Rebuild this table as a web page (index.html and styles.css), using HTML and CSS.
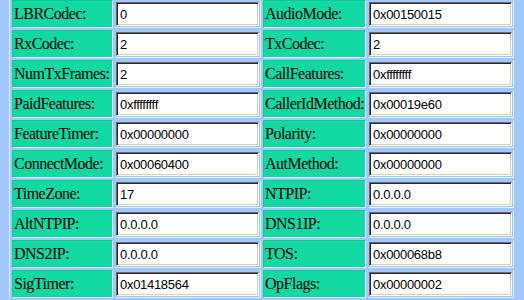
FILE: index.html
```html
<!DOCTYPE html>
<html>
<head>
<meta charset="utf-8">
<link rel="stylesheet" href="styles.css">
</head>
<body>
<div class="frame">
  <div class="grid">
    <div class="lbl">LBRCodec:</div><div class="val"><input class="fld" type="text" value="0"></div>
    <div class="lbl">AudioMode:</div><div class="val"><input class="fld" type="text" value="0x00150015"></div>

    <div class="lbl">RxCodec:</div><div class="val"><input class="fld" type="text" value="2"></div>
    <div class="lbl">TxCodec:</div><div class="val"><input class="fld" type="text" value="2"></div>

    <div class="lbl">NumTxFrames:</div><div class="val"><input class="fld" type="text" value="2"></div>
    <div class="lbl">CallFeatures:</div><div class="val"><input class="fld" type="text" value="0xffffffff"></div>

    <div class="lbl">PaidFeatures:</div><div class="val"><input class="fld" type="text" value="0xffffffff"></div>
    <div class="lbl">CallerIdMethod:</div><div class="val"><input class="fld" type="text" value="0x00019e60"></div>

    <div class="lbl">FeatureTimer:</div><div class="val"><input class="fld" type="text" value="0x00000000"></div>
    <div class="lbl">Polarity:</div><div class="val"><input class="fld" type="text" value="0x00000000"></div>

    <div class="lbl">ConnectMode:</div><div class="val"><input class="fld" type="text" value="0x00060400"></div>
    <div class="lbl">AutMethod:</div><div class="val"><input class="fld" type="text" value="0x00000000"></div>

    <div class="lbl">TimeZone:</div><div class="val"><input class="fld" type="text" value="17"></div>
    <div class="lbl">NTPIP:</div><div class="val"><input class="fld" type="text" value="0.0.0.0"></div>

    <div class="lbl">AltNTPIP:</div><div class="val"><input class="fld" type="text" value="0.0.0.0"></div>
    <div class="lbl">DNS1IP:</div><div class="val"><input class="fld" type="text" value="0.0.0.0"></div>

    <div class="lbl">DNS2IP:</div><div class="val"><input class="fld" type="text" value="0.0.0.0"></div>
    <div class="lbl">TOS:</div><div class="val"><input class="fld" type="text" value="0x000068b8"></div>

    <div class="lbl">SigTimer:</div><div class="val"><input class="fld" type="text" value="0x01418564"></div>
    <div class="lbl">OpFlags:</div><div class="val"><input class="fld" type="text" value="0x00000002"></div>
  </div>
</div>
</body>
</html>
```
FILE: styles.css
```css
html, body {
  margin: 0;
  padding: 0;
  background: #a0c8fa;
  overflow: hidden;
}

.frame {
  margin-left: 9px;
  width: 505px;
  border-left: 1px solid #e4f0ff;
  padding-left: 2px;
}

.grid {
  display: grid;
  grid-template-columns: 101px 146px 103px 146px;
  grid-auto-rows: 28px;
  column-gap: 2px;
  row-gap: 2px;
}

.lbl {
  box-sizing: border-box;
  background: #12d8a2;
  border-top: 1px solid #10c896;
  border-left: 1px solid #10c896;
  border-right: 1px solid #e4f0ff;
  border-bottom: 1px solid #e4f0ff;
  padding-left: 1px;
  display: flex;
  align-items: center;
  font-family: "Liberation Serif", "Times New Roman", serif;
  font-size: 16px;
  letter-spacing: -0.5px;
  color: #000;
  white-space: nowrap;
  overflow: hidden;
}

.val {
  box-sizing: border-box;
  border-top: 1px solid #a0c8fa;
  border-left: 1px solid #a0c8fa;
  border-right: 1px solid #e4f0ff;
  border-bottom: 1px solid #e4f0ff;
  display: flex;
  align-items: center;
}

.fld {
  box-sizing: border-box;
  width: 143px;
  height: 24px;
  margin: 0;
  padding: 0 2px 0 3px;
  background: #fff;
  border-style: solid;
  border-width: 1px;
  border-color: #6a6478 #fbfbf4 #fbfbf4 #6a6478;
  box-shadow: inset 1px 1px 0 #2a2430, inset -1px -1px 0 #d8d2b0;
  font-family: "Liberation Sans", Arial, sans-serif;
  font-size: 13px;
  letter-spacing: -0.3px;
  color: #000;
  outline: none;
}
```
